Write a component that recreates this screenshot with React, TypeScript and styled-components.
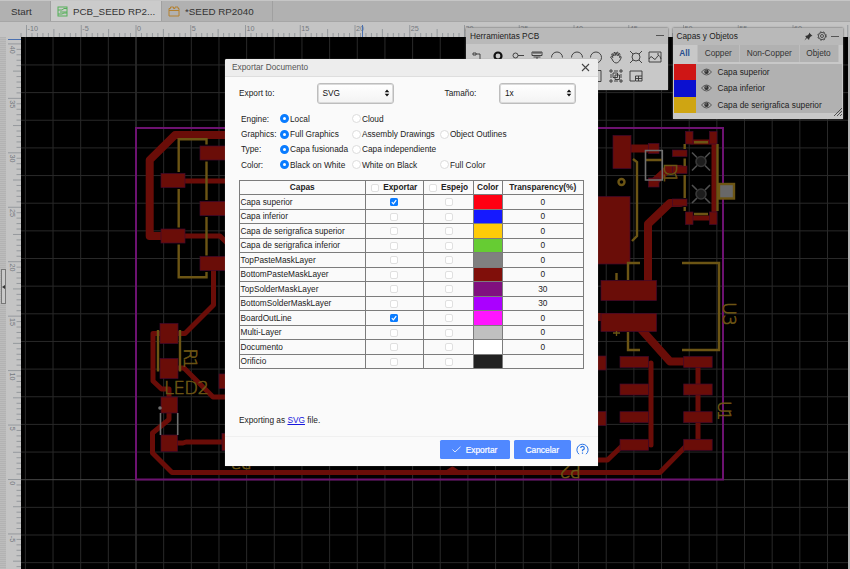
import React from "react";
import styled, { createGlobalStyle } from "styled-components";

const Global = createGlobalStyle`
  * { box-sizing: border-box; }
  body { margin: 0; overflow: hidden; background: #000; font-family: "Liberation Sans", Arial, sans-serif; font-size: 8.3px; color: #222; }
`;

const Screen = styled.div`
  position: relative;
  display: flex;
  flex-direction: column;
  width: 850px;
  height: 569px;
  overflow: hidden;
`;

const TabBar = styled.div`
  display: flex;
  flex: none;
  height: 22px;
  padding-left: 5px;
  background: #b1b1b1;
  border-top: 1.5px solid #c6c6c6;
  border-bottom: 1px solid #a6a6a6;
`;
const Tab = styled.div<{ $w: number; $active?: boolean }>`
  display: flex;
  align-items: center;
  width: ${(p) => p.$w}px;
  padding: 1px 0 0 6px;
  gap: 5px;
  font-size: 9.8px;
  white-space: nowrap;
  color: #333;
  background: ${(p) => (p.$active ? "#cbcbcb" : "transparent")};
  border-right: 1px solid #a0a0a0;
  svg { flex: none; }
`;

const TopRuler = styled.div`
  flex: none;
  height: 15px;
  background: #c4c4c4;
  svg { display: block; }
`;
const Workspace = styled.div`
  display: flex;
  flex: 1;
  min-height: 0;
  svg { display: block; flex: none; }
`;
const Gutter = styled.div`
  display: flex;
  align-items: flex-start;
  width: 6px;
  padding-top: 232px;
  background: repeating-linear-gradient(0deg, #bcbcbc 0 1px, #b3b3b3 1px 2px);
`;
const Handle = styled.div`
  display: flex;
  align-items: center;
  width: 5px;
  height: 35px;
  margin-left: 1px;
  background: #c8c8c8;
  border: 1px solid #777;
  &::after {
    content: "";
    border: 2px solid transparent;
    border-left: 0;
    border-right: 3px solid #333;
  }
`;
const RightEdge = styled.div`
  width: 2px;
  background: #b4b4b4;
`;

const Window = styled.section<{ $x: number; $y: number; $w: number; $h: number }>`
  position: absolute;
  left: ${(p) => p.$x}px;
  top: ${(p) => p.$y}px;
  width: ${(p) => p.$w}px;
  height: ${(p) => p.$h}px;
  display: flex;
  flex-direction: column;
  background: #c8c8c8;
  box-shadow: 0 0 2px #555;
`;
const PanelTitle = styled.header<{ $h: number }>`
  display: flex;
  align-items: center;
  height: ${(p) => p.$h}px;
  padding: 0 3px 0 4px;
  gap: 4px;
  background: #b9b9b9;
  color: #1d1d1d;
  span { flex: 1; }
`;
const ToolGrid = styled.div`
  display: grid;
  grid-template-columns: repeat(10, 19.7px);
  grid-template-rows: 19.5px 19.5px;
  justify-content: center;
  align-content: center;
  justify-items: center;
  align-items: center;
  flex: 1;
`;

const FilterTabs = styled.div`
  display: flex;
  height: 17px;
  margin-right: 4px;
  background: #b1b1b1;
`;
const FilterTab = styled.div<{ $w: number; $active?: boolean }>`
  display: flex;
  align-items: center;
  justify-content: center;
  width: ${(p) => p.$w}px;
  color: ${(p) => (p.$active ? "#274f90" : "#333")};
  font-weight: ${(p) => (p.$active ? 700 : 400)};
  background: ${(p) => (p.$active ? "#c8c8c8" : "transparent")};
  border-right: 1px solid #bdbdbd;
`;
const LayerList = styled.div`
  margin: 2px 1px 0;
  background: #b1b1b1;
`;
const LayerRow = styled.div`
  display: flex;
  align-items: center;
  height: 16.65px;
  gap: 5.5px;
`;
const LayerSwatch = styled.div<{ $c: string }>`
  width: 22px;
  height: 100%;
  background: ${(p) => p.$c};
`;
const ResizeCorner = styled.div`
  display: flex;
  justify-content: flex-end;
  margin-top: -6px;
`;

const Dialog = styled(Window)`
  background: #fafafa;
  border-radius: 2px 2px 0 0;
  box-shadow: 0 0 1px #888;
`;
const DialogTitle = styled.header`
  display: flex;
  align-items: center;
  justify-content: space-between;
  height: 18px;
  padding: 0 8px 0 7px;
  color: #555;
  background: #ededed;
  border-bottom: 1px solid #dedede;
  border-radius: 2px 2px 0 0;
`;
const SelectRow = styled.div`
  display: flex;
  align-items: center;
  height: 22px;
  margin-top: 5.5px;
  padding-left: 14px;
`;
const SelectLabel = styled.label<{ $w: number }>`
  width: ${(p) => p.$w}px;
`;
const SelectBox = styled.div`
  display: flex;
  align-items: center;
  justify-content: space-between;
  width: 77px;
  height: 21px;
  padding: 0 3px 0 5px;
  background: linear-gradient(#fff, #f3f3f3);
  border: 1px solid #bdbdbd;
  box-shadow: inset 0 0 0 1px #dadada;
  border-radius: 3px;
  color: #111;
`;
const Gap = styled.div<{ $w: number }>`
  width: ${(p) => p.$w}px;
`;
const Options = styled.div`
  display: grid;
  grid-template-columns: 39.5px 72px 88px 1fr;
  grid-auto-rows: 15.25px;
  align-items: center;
  margin: 7px 0 0 16px;
`;
const Choice = styled.div`
  display: flex;
  align-items: center;
  gap: 1px;
  margin-left: -0.6px;
  white-space: nowrap;
`;
const Radio = styled.i<{ $on?: boolean }>`
  flex: none;
  width: 9px;
  height: 9px;
  border-radius: 50%;
  background: #fff;
  border: ${(p) => (p.$on ? "3px solid #0a7cff" : "1px solid #dcdcdc")};
`;

const Table = styled.table`
  table-layout: fixed;
  border-collapse: collapse;
  width: 344px;
  margin: 7.6px 0 0 14px;
  tr { height: 14.5px; }
  th, td { border: 1px solid #7c7c7c; padding: 0; line-height: 11px; text-align: center; }
  td:first-child { text-align: left; padding-left: 0.5px; }
`;
const Col = styled.col<{ $w: number }>`
  width: ${(p) => p.$w}px;
`;
const HeadCell = styled.div`
  display: flex;
  align-items: center;
  justify-content: center;
  gap: 4px;
`;
const Check = styled.i`
  display: block;
  width: 8px;
  height: 8px;
  margin: 0 auto;
  border: 1px solid #e0e0e0;
  border-radius: 2px;
  background: #fff;
  ${HeadCell} & { margin: 0; }
`;
const CheckedBox = styled.svg`
  display: block;
  margin: 0 auto;
`;
const ColorCell = styled.td<{ $c: string }>`
  background: ${(p) => p.$c};
`;
const Status = styled.p`
  margin: auto 0 0;
  height: 21px;
  padding-left: 14px;
  a { color: #1717dd; }
`;
const Footer = styled.footer`
  display: flex;
  align-items: center;
  justify-content: flex-end;
  gap: 4px;
  height: 30px;
  padding: 0 9px 3px 0;
  border-top: 1px solid #f0f0f0;
`;
const Button = styled.button<{ $w: number }>`
  display: flex;
  align-items: center;
  justify-content: center;
  gap: 5px;
  width: ${(p) => p.$w}px;
  height: 19.5px;
  padding: 0;
  border: 0;
  border-radius: 1.5px;
  background: #5088ff;
  color: #fff;
  font: 8.4px "Liberation Sans", sans-serif;
  -webkit-text-stroke: 0.2px #fff;
`;
const HelpIcon = styled.svg`
  margin-left: 1px;
`;

const RED = "#6a0d08";
const GOLD = "#6c5514";

const range = (a: number, b: number) => Array.from({ length: b - a + 1 }, (_, i) => a + i);

const HorizontalRuler = () => (
  <svg width="850" height="15" viewBox="0 22 850 15" fontFamily="Liberation Sans" fontSize="7.200" fill="#74797f">
    {range(-21, 131).map((i) => {
      const x = 136 + i * 5.475;
      if (x < 21) return null;
      const top = i % 10 === 0 ? 25 : i % 5 === 0 ? 29 : 33;
      return <path key={i} d={`M${x} ${top}V37`} stroke="#898e93" strokeWidth=".8" />;
    })}
    {range(-2, 12).map((i) => (
      <text key={i} x={137 + i * 54.75} y="31">{i * 5}</text>
    ))}
    <path d="M362.500 25V37" stroke="#4a70b0" />
  </svg>
);

const VerticalRuler = () => (
  <svg width="15" height="532" viewBox="6 37 15 532" fontFamily="Liberation Sans" fontSize="7.200" fill="#74797f">
    <rect x="6" y="37" width="15" height="532" fill="#c4c4c4" />
    {range(-16, 80).map((i) => {
      const y = 479.5 - i * 5.445;
      const left = i % 10 === 0 ? 8 : i % 5 === 0 ? 13 : 16.5;
      return <path key={i} d={`M${left} ${y}H21`} stroke="#898e93" strokeWidth=".8" />;
    })}
    {range(-1, 8).map((i) => (
      <text key={i} transform={`translate(9.500 ${481.3 - i * 54.45}) rotate(90)`}>{i * 5}</text>
    ))}
    <path d="M8 39.500H21" stroke="#4a70b0" />
  </svg>
);

const pads: [number, number, number, number][] = [
  [161, 173.5, 24, 14], [161, 229, 24, 14], [200, 146, 40, 14], [200, 201.5, 40, 14], [200, 256.5, 40, 14],
  [160, 323.5, 18, 20], [160, 358.5, 18, 20], [219, 374, 12, 14.5], [161, 397, 16.5, 16], [161, 435, 16.5, 16.5], [222, 433.5, 8, 17],
  [613, 135.5, 18, 33], [648.5, 143.5, 10.5, 10], [648.5, 178, 10.5, 9], [672.5, 150, 14.5, 6.5], [672.5, 166, 14.5, 7.5], [672.5, 199, 14.5, 7],
  [685.5, 131.5, 7.5, 12.5], [709.5, 131.5, 7.5, 12.5], [685.5, 212, 7.5, 12.5], [709.5, 212, 7.5, 12.5],
  [590, 196.5, 40, 67.5], [601, 280.5, 55.5, 20], [601, 313.5, 55.5, 18], [590, 356, 16, 14], [590, 411.5, 16, 14],
  ...[356.5, 384, 411.7, 439.3].flatMap((y) => [[620, y, 28.5, 11], [683.7, y, 28.5, 11]] as [number, number, number, number][]),
];

const Board = () => (
  <svg width="827" height="532" viewBox="21 37 827 532" fill="none">
    <rect x="21" y="37" width="827" height="532" fill="#000" />
    {range(-4, 25).map((i) => (
      <path key={i} d={`M${136 + i * 27.66} 37V569`} stroke={i === 0 ? "#484848" : "#292929"} />
    ))}
    {range(-3, 15).map((i) => (
      <path key={i} d={`M21 ${479.7 - i * 27.65}H848`} stroke={i === 0 ? "#484848" : "#292929"} />
    ))}
    <rect x="136" y="128" width="587" height="351.500" stroke="#6c1270" strokeWidth="2" />
    <g stroke={RED} strokeWidth="5" strokeLinejoin="round" strokeLinecap="round">
      <path strokeWidth="8" d="M240 135H175L149.700 160V236H165M628 148.500H652M654 182L668 169H680M680 203H670L648 224V285M640 328L670 361.500H686M590 317H624" />
      <path d="M185 181H240M185 236H220L230 246M213.500 268V305L185 333.500H178M161 333.500H153V381L161.500 389H169V400M178 368H184L213 397H240" />
      <path d="M169 410V419.500L152.500 433V453L172 472.500H660L686 446M177 443H183L186 442H222M448 472L452.500 469L457 472" />
      <path d="M651 363V445M698 364V442M590 460H607.500L622 446M691 142H711M691 218H711M714 143V214" />
    </g>
    <g fill={RED} stroke="#43092c" strokeWidth=".7">
      {pads.map(([x, y, w, h], i) => <rect key={i} x={x} y={y} width={w} height={h} />)}
    </g>
    <g stroke={GOLD} strokeWidth="2.400">
      <path d="M178.700 172V139.300H206.500V144.500M178.700 189V227.500M178.700 244.500V277.300H206.500V272M206.500 161.500V200M206.500 217V255.500M158 330V371.500M180 330V371.500" />
      <path d="M633 159L637 162V236L632 241M694 142.300H708M694 214H708M684.700 144V149M684.700 158.500V166M684.700 175V198M684.700 207V211M717.500 144V211M645.500 160H662" />
      <path d="M628 280V263H640M682 263H719V350H682M628 332V350H640M616.500 273V280" />
      <path strokeWidth="1.300" d="M613 333H620M616.500 331V336" />
      <circle cx="621.500" cy="182" r="3" />
      <rect x="719" y="184" width="15" height="14.500" fill="#686868" />
    </g>
    <g stroke="#707070" strokeWidth="1.600">
      <path d="M645.500 150.500H662.300V180H645.500ZM160.500 413V435M177.700 413V435" />
      <path stroke="#505050" d="M692 152.500L697 157.500M710 152.500L705 157.500M692 170.500L697 165.500M710 170.500L705 165.500M692 185L697 190M710 185L705 190M692 203L697 198M710 203L705 198" />
      <circle cx="701" cy="161.500" r="5" fill="#1d1d1d" stroke="#383838" />
      <circle cx="701" cy="194" r="5" fill="#1d1d1d" stroke="#383838" />
      <circle cx="160" cy="408" r="1" fill="#707070" />
    </g>
    <g fill={GOLD} stroke={GOLD} strokeWidth=".6" fontFamily="DejaVu Sans" fontWeight="200" fontSize="18">
      <text x="164" y="393.700" textLength="45">LED2</text>
      <text transform="translate(183.500 348.500) rotate(90)" fontSize="17" textLength="20">R1</text>
      <text transform="translate(664 163) rotate(90)" fontSize="17" textLength="20">D1</text>
      <text transform="translate(723 302) rotate(90)" fontSize="18" textLength="24">U3</text>
      <text transform="translate(717.500 401) rotate(90)" fontSize="17" textLength="19.500">U1</text>
      <text transform="translate(581 465) rotate(180)" textLength="22">P2</text>
      <text transform="translate(252 456) rotate(180)" textLength="22">P3</text>
    </g>
  </svg>
);

const toolPaths = [
  "M2 3H5V5H2ZM5 4H9V10M7 10H11V13H7Z",
  "",
  "M2 5.500A2.500 2.500 0 1 1 7 5.500A2.500 2.500 0 1 1 2 5.500M7 5.500H13",
  "M2 2H12V5.500H2ZM4 2V4M6 2V4M8 2V4M10 2V4M3.500 7H10.500M7 7V12",
  "M1.500 7.500A5.500 5.500 0 1 1 12.500 7.500",
  "M1.500 7.500A5.500 5.500 0 1 1 12.500 7.500",
  "M1.500 7.500A5.500 5.500 0 1 1 12.500 7.500A5.500 5.500 0 0 1 7 13",
  "M3 9L1.500 7Q2.500 5.500 4 7.500L2.700 4Q3.500 2.500 5 6L5 2.500Q6.500 1 6.800 5.500L8 2Q9.500 1.500 8.800 6L10 3.500Q11.500 3 10.500 7.500L12 6.500Q13 7 10.500 11Q7 15 4 11Z",
  "M3 7A4 4 0 1 1 11 7A4 4 0 1 1 3 7M1 1L4 4M13 1L10 4M1 13L4 10M13 13L10 10",
  "M1 2H13V12H1ZM1 9Q3 5 5 8T9 7T13 9M9 4H11",
];
const bottomTools = ["", "", "", "", "", "", "M1 1.500H12V12.500H1", "M1 1H3V3H1ZM11 1H13V3H11ZM1 11H3V13H1ZM11 11H13V13H11ZM4 4H8.500V8.500H4ZM6 6H10.500V10.500H6ZM5 2H9M5 12H9M2 5V9M12 5V9", "M13 7V2H1V12H6M6.500 7H13V12H6.500ZM9.500 7V12M6.500 9.500H13"];

const Tool = ({ d, bold }: { d: string; bold?: boolean }) => (
  <svg width="14" height="14" viewBox="0 0 14 14" fill="none" stroke="#333" strokeWidth=".9">
    {bold ? <circle cx="7" cy="6" r="3.500" stroke="#111" strokeWidth="2.200" /> : <path d={d} />}
  </svg>
);
const Minus = () => <svg width="9" height="3"><path d="M0 1.500H8" stroke="#555" /></svg>;
const Arrows = () => <svg width="6" height="8" viewBox="0 0 6 8"><path d="M.7 3.300L3 .5L5.300 3.300ZM.7 4.700L3 7.500L5.300 4.700Z" fill="#111" /></svg>;
const Eye = () => (
  <svg width="11" height="8" viewBox="0 0 11 8"><path d="M.5 4Q5.500-2 10.500 4Q5.500 10 .5 4Z" fill="none" stroke="#444" strokeWidth=".8" /><circle cx="5.500" cy="3.800" r="2.200" fill="#333" /><circle cx="5" cy="3" r=".7" fill="#999" /></svg>
);
const Box = ({ on }: { on?: boolean }) =>
  on ? (
    <CheckedBox width="8" height="8" viewBox="0 0 8 8"><rect width="8" height="8" rx="1.600" fill="#0a7cff" /><path d="M1.800 4.200L3.400 5.900L6.200 2.100" fill="none" stroke="#fff" strokeWidth="1.200" /></CheckedBox>
  ) : <Check />;

const options = [
  ["Engine:", "Local", "Cloud"],
  ["Graphics:", "Full Graphics", "Assembly Drawings", "Object Outlines"],
  ["Type:", "Capa fusionada", "Capa independiente"],
  ["Color:", "Black on White", "White on Black", "Full Color"],
];
const layers: [string, string, string, boolean?][] = [
  ["Capa superior", "#ff0012", "0", true],
  ["Capa inferior", "#1519ff", "0"],
  ["Capa de serigrafica superior", "#ffcb08", "0"],
  ["Capa de serigrafica inferior", "#66cc33", "0"],
  ["TopPasteMaskLayer", "#808080", "0"],
  ["BottomPasteMaskLayer", "#800f0a", "0"],
  ["TopSolderMaskLayer", "#80107f", "30"],
  ["BottomSolderMaskLayer", "#aa00ff", "30"],
  ["BoardOutLine", "#ff14ff", "0", true],
  ["Multi-Layer", "#c0c0c0", "0"],
  ["Documento", "#ffffff", "0"],
  ["Orificio", "#222222", ""],
];

export default function App() {
  return (
    <Screen>
      <Global />
      <TabBar>
        <Tab $w={46}>Start</Tab>
        <Tab $w={111} $active>
          <svg width="11" height="11" viewBox="0 0 11 11" fill="none" stroke="#55b058"><rect x="1" y="1" width="9" height="9" /><path d="M1 4H5L7 2.500H10M3 6H10M1 8H5L7 7H10" /></svg>
          PCB_SEED RP2...
        </Tab>
        <Tab $w={111}>
          <svg width="12" height="11" viewBox="0 0 12 11" fill="none" stroke="#b48130"><path d="M1 10V2.500H2.500V1H5.500V2.500H7V1H10V2.500H11V10ZM1 4.500H11" /></svg>
          *SEED RP2040
        </Tab>
      </TabBar>
      <TopRuler><HorizontalRuler /></TopRuler>
      <Workspace>
        <Gutter><Handle /></Gutter>
        <VerticalRuler />
        <Board />
        <RightEdge />
      </Workspace>

      <Window $x={466} $y={27.5} $w={201.5} $h={62}>
        <PanelTitle $h={16}><span>Herramientas PCB</span><Minus /></PanelTitle>
        <ToolGrid>
          {toolPaths.map((d, i) => <Tool key={i} d={d} bold={i === 1} />)}
          {bottomTools.map((d, i) => <Tool key={i} d={d} />)}
        </ToolGrid>
      </Window>

      <Window $x={672.5} $y={28} $w={170} $h={90.5}>
        <PanelTitle $h={16.5}>
          <span>Capas y Objetos</span>
          <svg width="9" height="9" viewBox="0 0 9 9"><path d="M5 .5L8.500 4L7 4.300L5.500 6L5 8L3 6L.5 8.500L2.300 5.300L1 4L3.300 3.500L5 2Z" fill="#333" /></svg>
          <svg width="10" height="10" viewBox="0 0 10 10" fill="none" stroke="#333"><circle cx="5" cy="5" r="3.600" strokeWidth=".8" /><circle cx="5" cy="5" r="1.500" strokeWidth=".8" /><circle cx="5" cy="5" r="4.300" strokeWidth=".8" strokeDasharray="1.500 2" /></svg>
          <Minus />
        </PanelTitle>
        <FilterTabs>
          <FilterTab $w={25} $active>All</FilterTab>
          <FilterTab $w={42.5}>Copper</FilterTab>
          <FilterTab $w={59.5}>Non-Copper</FilterTab>
          <FilterTab $w={39}>Objeto</FilterTab>
        </FilterTabs>
        <LayerList>
          {[["Capa superior", "#cf1615"], ["Capa inferior", "#0b10d0"], ["Capa de serigrafica superior", "#cfa512"]].map(([name, c]) => (
            <LayerRow key={name}><LayerSwatch $c={c} /><Eye />{name}</LayerRow>
          ))}
        </LayerList>
        <ResizeCorner><svg width="10" height="10"><path d="M1 9L9 1M4 9L9 4M7 9L9 7" stroke="#333" strokeWidth=".8" /></svg></ResizeCorner>
      </Window>

      <Dialog $x={225} $y={58.7} $w={373} $h={407}>
        <DialogTitle>
          Exportar Documento
          <svg width="9" height="9"><path d="M1 1L8 8M8 1L1 8" stroke="#444" strokeWidth="1.100" /></svg>
        </DialogTitle>
        <SelectRow>
          <SelectLabel $w={77.5}>Export to:</SelectLabel>
          <SelectBox>SVG<Arrows /></SelectBox>
          <Gap $w={51} />
          <SelectLabel $w={54.5}>Tamaño:</SelectLabel>
          <SelectBox>1x<Arrows /></SelectBox>
        </SelectRow>
        <Options>
          {options.map(([label, ...choices]) => (
            <React.Fragment key={label}>
              <span>{label}</span>
              {[0, 1, 2].map((i) => (
                <Choice key={i}>{choices[i] && <><Radio $on={i === 0} />{choices[i]}</>}</Choice>
              ))}
            </React.Fragment>
          ))}
        </Options>
        <Table>
          <colgroup><Col $w={125.5} /><Col $w={58.5} /><Col $w={50} /><Col $w={28.5} /><Col $w={81.5} /></colgroup>
          <thead>
            <tr><th>Capas</th><th><HeadCell><Box />Exportar</HeadCell></th><th><HeadCell><Box />Espejo</HeadCell></th><th>Color</th><th>Transparency(%)</th></tr>
          </thead>
          <tbody>
            {layers.map(([name, color, alpha, on]) => (
              <tr key={name}><td>{name}</td><td><Box on={on} /></td><td><Box /></td><ColorCell $c={color} /><td>{alpha}</td></tr>
            ))}
          </tbody>
        </Table>
        <Status>Exporting as <a href="#svg">SVG</a> file.</Status>
        <Footer>
          <Button $w={70}>
            <svg width="9" height="7" viewBox="0 0 9 7"><path d="M.5 3.500L3 6L8.500 .8" fill="none" stroke="#fff" strokeWidth=".8" /></svg>
            Exportar
          </Button>
          <Button $w={57.5}>Cancelar</Button>
          <HelpIcon width="13" height="13" viewBox="0 0 13 13" fill="none" stroke="#2772e6"><path d="M3 11.200A5.600 5.600 0 1 1 10 11.200" /><path d="M4.700 5A1.800 1.800 0 1 1 6.500 7V8.300M6.500 9.500V10.700" strokeWidth="1.200" /></HelpIcon>
        </Footer>
      </Dialog>
    </Screen>
  );
}
